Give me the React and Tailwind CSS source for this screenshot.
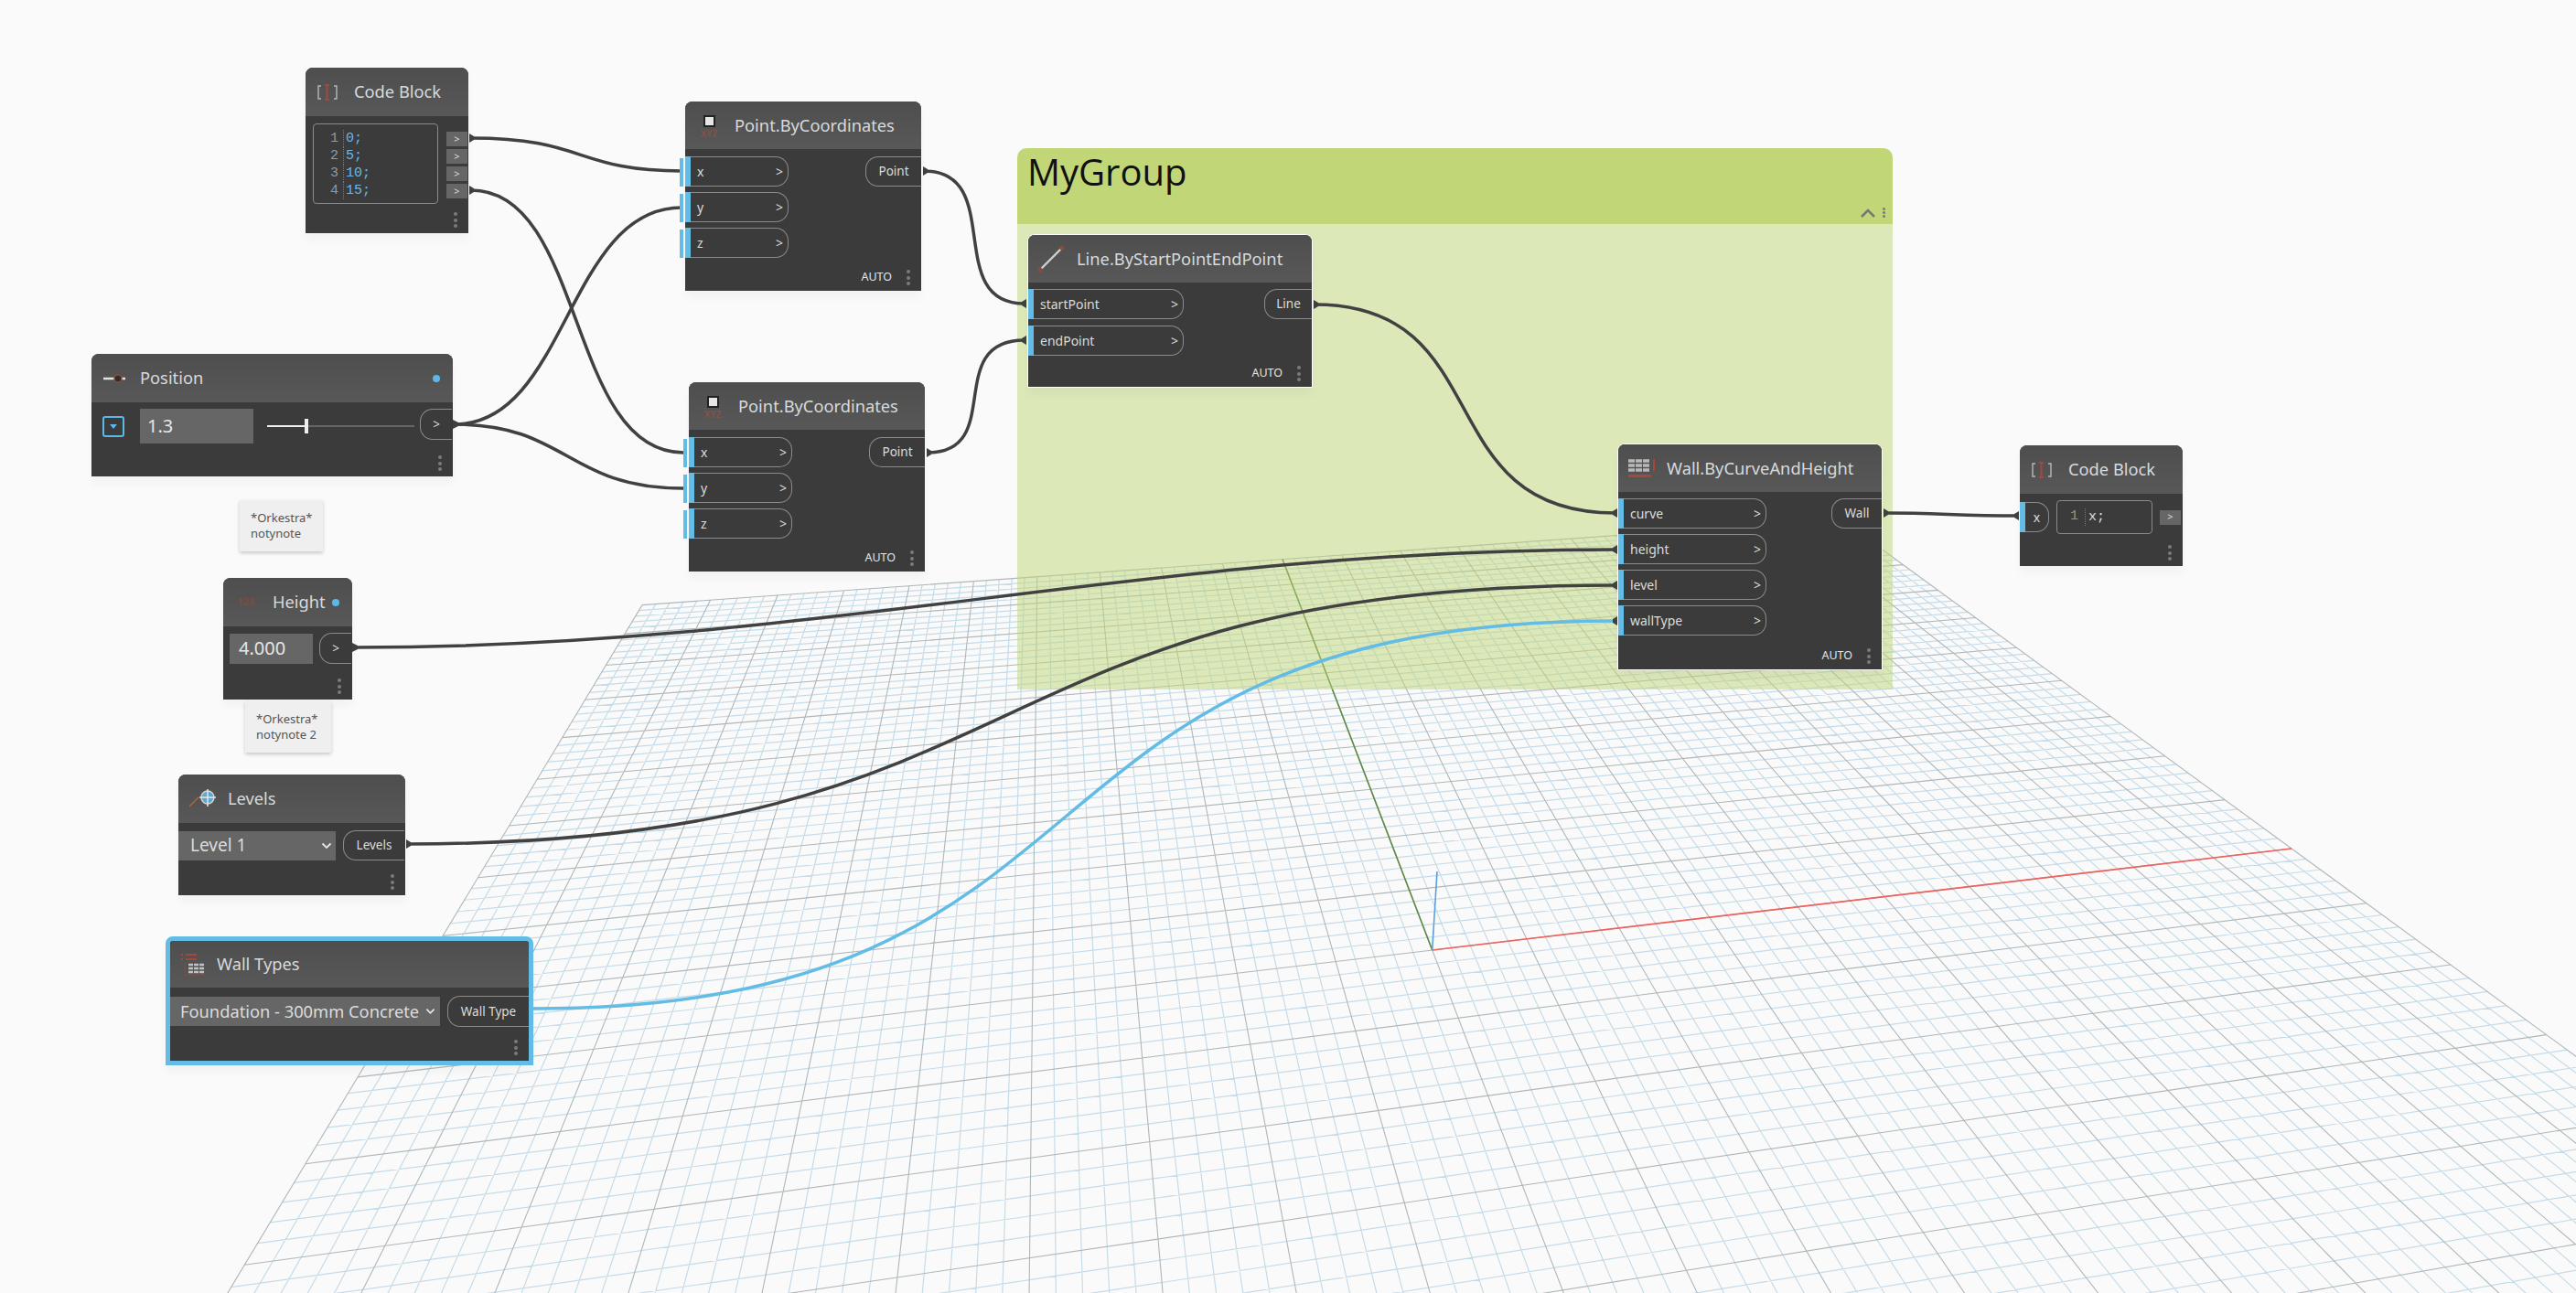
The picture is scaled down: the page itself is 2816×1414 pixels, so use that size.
import React from 'react';

// Perspective mapping of the ground plane, world units are major grid cells
const project = (X, Y) => {
  const w = 1 + 0.011135 * X + 0.06285 * Y;
  return [(1565.7 + 121.82 * X + 71.75 * Y) / w, (1039 - 0.77 * X - 4.3 * Y) / w];
};

const gridLines = () => {
  const minor = [];
  const major = [];
  for (let i = -50; i <= 50; i++) {
    const t = i / 5;
    const [a, b] = [project(t, -10), project(t, 10)];
    const [c, d] = [project(-10, t), project(10, t)];
    const target = i % 5 === 0 ? major : minor;
    target.push(`M${a[0].toFixed(1)} ${a[1].toFixed(1)}L${b[0].toFixed(1)} ${b[1].toFixed(1)}`);
    target.push(`M${c[0].toFixed(1)} ${c[1].toFixed(1)}L${d[0].toFixed(1)} ${d[1].toFixed(1)}`);
  }
  return { minor: minor.join(''), major: major.join('') };
};

const Grid = () => {
  const { minor, major } = gridLines();
  const o = project(0, 0);
  const xEnd = project(10, 0);
  const yEnd = project(0, 10);
  return (
    <svg className="absolute left-0 top-0" width="2816" height="1414" viewBox="0 0 2816 1414" fill="none">
      <path d={minor} stroke="#c6dbe8" strokeWidth="1.2" />
      <path d={major} stroke="#afb7ba" strokeWidth="1.1" />
      <line x1={o[0]} y1={o[1]} x2={xEnd[0]} y2={xEnd[1]} stroke="#f0605c" strokeWidth="1.6" />
      <line x1={o[0]} y1={o[1]} x2={yEnd[0]} y2={yEnd[1]} stroke="#5d8a45" strokeWidth="1.6" />
      <line x1={o[0]} y1={o[1]} x2="1571" y2="953" stroke="#5a9fe0" strokeWidth="1.6" />
    </svg>
  );
};

const Wires = () => (
  <svg className="absolute left-0 top-0" width="2816" height="1414" viewBox="0 0 2816 1414" fill="none">
    <g stroke="#414141" strokeWidth="3.5">
      <path d="M515 151C640 151 630 187 745 187" />
      <path d="M515 208C640 208 620 495 747 495" />
      <path d="M497 464C620 464 620 227 745 227" />
      <path d="M497 464C620 464 620 534 747 534" />
      <path d="M1010 187C1100 187 1030 332 1120 332" />
      <path d="M1014 495C1100 495 1030 372 1120 372" />
      <path d="M1437 333C1640 333 1560 561 1766 561" />
      <path d="M2060 561C2120 561 2140 564 2205 564" />
      <path d="M387 708C900 708 1250 601 1766 601" />
      <path d="M445 923C1150 923 1050 640 1766 640" />
    </g>
    <path d="M583 1103C1250 1103 1080 679 1766 679" stroke="#62bce6" strokeWidth="3.5" />
    <g fill="#414141">
      <path d="M513 146L518 149V153L513 156Z" />
      <path d="M513 203L518 206V210L513 213Z" />
      <path d="M495 459L501 462V466L495 469Z" />
      <path d="M1009 182L1014 185V189L1009 192Z" />
      <path d="M1013 490L1018 493V497L1013 500Z" />
      <path d="M1436 328L1441 331V335L1436 338Z" />
      <path d="M2059 556L2064 559V563L2059 566Z" />
      <path d="M385 703L391 706V710L385 713Z" />
      <path d="M444 918L449 921V925L444 928Z" />
      <path d="M1122 327L1117 330V334L1122 337Z" />
      <path d="M1122 367L1117 370V374L1122 377Z" />
      <path d="M1768 556L1763 559V563L1768 566Z" />
      <path d="M1768 596L1763 599V603L1768 606Z" />
      <path d="M1768 635L1763 638V642L1768 645Z" />
      <path d="M1768 674L1763 677V681L1768 684Z" />
      <path d="M2207 559L2202 562V566L2207 569Z" />
    </g>
  </svg>
);

const Dots = () => (
  <div className="flex flex-col gap-[2.5px]">
    <span className="h-1 w-1 rounded-full bg-[#7b7b7b]" />
    <span className="h-1 w-1 rounded-full bg-[#7b7b7b]" />
    <span className="h-1 w-1 rounded-full bg-[#7b7b7b]" />
  </div>
);

const Footer = ({ auto }) => (
  <div className="mt-auto flex items-center justify-end gap-[16px] pb-[6px] pr-[12px]">
    {auto && <span className="text-[12.5px] leading-none text-[#e4e4e4]">AUTO</span>}
    <Dots />
  </div>
);

const InPort = ({ label, stub, className }) => (
  <div className={`relative flex items-center justify-between rounded-r-[14px] border border-l-0 border-[#8b8b8b] pr-[5px] text-[14px] text-[#dcdcdc] ${className}`}>
    {stub && <span className="absolute -left-[6px] top-px h-[31px] w-[4px] bg-[#62bce6]" />}
    <span className="absolute left-0 -top-px -bottom-px w-[6px] bg-[#62bce6]" />
    <span className="pl-[13px]">{label}</span>
    <span className="text-[14px]">&gt;</span>
  </div>
);

const OutPort = ({ label, className }) => (
  <div className={`flex items-center justify-center rounded-l-[14px] border border-r-0 border-[#8b8b8b] text-[13.5px] text-[#dcdcdc] ${className}`}>
    {label}
  </div>
);

const Header = ({ icon, title, dot, className }) => (
  <div className={`flex shrink-0 items-center bg-linear-to-b from-[#4e4e4e] to-[#585858] ${className}`}>
    {icon}
    <span className="text-[18.3px] leading-none text-[#d6dadd]">{title}</span>
    {dot}
  </div>
);

const BracketIcon = ({ className }) => (
  <svg className={className} width="24" height="20" viewBox="0 0 24 20" fill="none">
    <path d="M5 3H2V17H5" stroke="#b8b8b8" strokeWidth="1.4" />
    <path d="M19 3H22V17H19" stroke="#b8b8b8" strokeWidth="1.4" />
    <path d="M9 2H14M11.5 2V18M9 18H14" stroke="#a5473b" strokeWidth="2" />
  </svg>
);

const PointIcon = ({ className }) => (
  <div className={`flex w-[24px] flex-col items-center pt-[3px] ${className}`}>
    <span className="h-[13px] w-[13px] border-2 border-[#222] bg-[#e6e6e6]" />
    <span className="mt-[2px] text-[10px] font-bold leading-[11px] text-[#7d5349]">XYZ</span>
  </div>
);

const SliderIcon = () => (
  <svg className="ml-[12px] mr-[14px]" width="27" height="14" viewBox="0 0 27 14" fill="none">
    <path d="M1 7H25" stroke="#e2e2e2" strokeWidth="2.5" />
    <circle cx="17" cy="7" r="4" fill="#2d2d2d" stroke="#8e4a3d" strokeWidth="1.5" />
  </svg>
);

const LevelsIcon = () => (
  <svg className="ml-[11px] mr-[11px]" width="32" height="22" viewBox="0 0 32 22" fill="none">
    <path d="M1 19L11 9" stroke="#b0643c" strokeWidth="1.5" />
    <circle cx="21" cy="9" r="7" fill="#5fa6cc" stroke="#d5d5d5" strokeWidth="1.4" />
    <path d="M21 0V19M12 9H30" stroke="#e6e6e6" strokeWidth="1.5" />
  </svg>
);

const WallTypesIcon = () => (
  <svg className="ml-[12px] mr-[12px]" width="27" height="25" viewBox="0 0 27 25" fill="none">
    <path d="M0 2H2M5 2H17M0 7H2M5 7H17" stroke="#a5473b" strokeWidth="2" />
    <path d="M4 11V24H26" stroke="#a5473b" strokeWidth="1" strokeDasharray="2 1" />
    <path d="M8 13H25M8 17H25M8 21H25" stroke="#c2c2c2" strokeWidth="2.5" strokeDasharray="5 1" />
  </svg>
);

const LineIcon = () => (
  <svg className="ml-[9px] mr-[12px]" width="32" height="32" viewBox="0 0 32 32" fill="none">
    <path d="M4 28L28 4" stroke="#cfcfcf" strokeWidth="2.4" />
    <circle cx="28" cy="4" r="2.6" fill="#8c4a3d" />
    <circle cx="4" cy="28" r="2.6" fill="#8c4a3d" />
  </svg>
);

const WallIcon = () => (
  <svg className="ml-[11px] mr-[13px]" width="29" height="22" viewBox="0 0 29 22" fill="none">
    <path d="M0 3H24M0 8H24M0 13H24" stroke="#b9b9b9" strokeWidth="3.5" strokeDasharray="7 1" />
    <path d="M0 19.5H25" stroke="#a5473b" strokeWidth="3" />
    <path d="M28 1V14" stroke="#a5473b" strokeWidth="2" />
  </svg>
);

const NodeShell = ({ className, children }) => (
  <div className={`absolute flex flex-col overflow-visible rounded-t-[8px] bg-[#3b3b3b] shadow-[0_8px_10px_rgba(0,0,0,0.03)] ${className}`}>
    {children}
  </div>
);

const PointNode = ({ className }) => (
  <NodeShell className={`h-[207px] w-[258px] ${className}`}>
    <Header
      className="h-[52px] rounded-t-[8px]"
      icon={<PointIcon className="ml-[14px] mr-[16px]" />}
      title="Point.ByCoordinates"
    />
    <div className="flex justify-between pt-[8px]">
      <div className="flex flex-col gap-[6px]">
        <InPort stub label="x" className="h-[33px] w-[113px]" />
        <InPort stub label="y" className="h-[33px] w-[113px]" />
        <InPort stub label="z" className="h-[33px] w-[113px]" />
      </div>
      <OutPort label="Point" className="h-[33px] w-[61px]" />
    </div>
    <Footer auto />
  </NodeShell>
);

const CodeLine = ({ n, code }) => (
  <div className="flex h-[19px] items-center font-['Liberation_Mono',monospace] text-[15px] leading-none">
    <span className="w-[27px] text-right text-[#8e9aa5]">{n}</span>
    <span className="ml-[5px] h-[19px] border-l border-dotted border-[#777] pl-[2px] leading-[19px] text-[#6bb8e6]">{code}</span>
  </div>
);

const NumberOut = ({ className }) => (
  <div className={`flex h-[16px] w-[23px] items-center justify-center bg-[#666] text-[11px] text-[#ddd] ${className}`}>&gt;</div>
);

export default function App() {
  return (
    <div className="relative h-[1414px] w-[2816px] overflow-hidden bg-[#fafafa] font-['Noto_Sans',sans-serif]">
      <Grid />

      {/* MyGroup */}
      <div className="absolute left-[1112px] top-[162px] flex h-[592px] w-[957px] flex-col">
        <div className="relative flex h-[83px] shrink-0 rounded-t-[10px] bg-[#c0d677] pl-[11px] pt-[1px] font-['Open_Sans',sans-serif] text-[40px] leading-[50px] text-[#111]">
          MyGroup
          <div className="absolute bottom-[7px] right-[8px] flex items-center gap-[8px]">
            <svg width="16" height="10" viewBox="0 0 16 10" fill="none">
              <path d="M1 9L8 2L15 9" stroke="#777" strokeWidth="2.5" />
            </svg>
            <div className="flex flex-col gap-px">
              <span className="h-[3px] w-[3px] rounded-full bg-[#777]" />
              <span className="h-[3px] w-[3px] rounded-full bg-[#777]" />
              <span className="h-[3px] w-[3px] rounded-full bg-[#777]" />
            </div>
          </div>
        </div>
        <div className="flex-1 bg-[#c0d677]/50" />
      </div>

      <Wires />

      {/* Code Block, numbers */}
      <NodeShell className="left-[334px] top-[74px] h-[181px] w-[178px]">
        <Header className="h-[53px] rounded-t-[8px]" icon={<BracketIcon className="ml-[12px] mr-[17px]" />} title="Code Block" />
        <div className="flex pl-[8px] pt-[8px]">
          <div className="h-[88px] w-[137px] rounded-[4px] border-[1.5px] border-[#8a8a8a] pt-[6px]">
            <CodeLine n="1" code="0;" />
            <CodeLine n="2" code="5;" />
            <CodeLine n="3" code="10;" />
            <CodeLine n="4" code="15;" />
          </div>
          <div className="ml-[9px] flex flex-col gap-[3px] pt-[9px]">
            <NumberOut />
            <NumberOut />
            <NumberOut />
            <NumberOut />
          </div>
        </div>
        <Footer />
      </NodeShell>

      <PointNode className="left-[749px] top-[111px]" />
      <PointNode className="left-[753px] top-[418px]" />

      {/* Position slider */}
      <NodeShell className="left-[100px] top-[387px] h-[134px] w-[395px]">
        <Header
          className="h-[53px] rounded-t-[8px]"
          icon={<SliderIcon />}
          title="Position"
          dot={<span className="ml-auto mr-[14px] h-2 w-2 rounded-full bg-[#5cb8e6]" />}
        />
        <div className="flex items-center pl-[12px] pt-[7px]">
          <div className="flex h-[23px] w-[24px] items-center justify-center rounded-[3px] border-2 border-[#5cb8e6]">
            <span className="h-0 w-0 border-x-[4px] border-t-[5px] border-x-transparent border-t-[#5cb8e6]" />
          </div>
          <div className="ml-[17px] flex h-[38px] w-[124px] items-center bg-[#666] pl-[8px] text-[20px] text-[#e6e6e6]">1.3</div>
          <div className="relative ml-[15px] h-[2px] w-[161px] bg-[#666]">
            <div className="h-[2px] w-[43px] bg-[#eee]" />
            <span className="absolute left-[41px] -top-[7px] h-[16px] w-[4px] bg-[#eee]" />
          </div>
          <OutPort label=">" className="ml-[6px] -mt-[4px] h-[34px] w-[35px] text-[11px]" />
        </div>
        <Footer />
      </NodeShell>

      {/* Notes */}
      <div className="absolute left-[262px] top-[547px] h-[56px] w-[91px] bg-[#efefef] pl-[12px] pt-[11px] text-[13px] leading-[17px] text-[#555] shadow-[0_2px_4px_rgba(0,0,0,0.2)]">
        *Orkestra*<br />notynote
      </div>

      {/* Height number */}
      <NodeShell className="left-[244px] top-[632px] h-[133px] w-[141px]">
        <Header
          className="h-[53px] rounded-t-[8px]"
          icon={<span className="ml-[15px] mr-[16px] w-[23px] text-[11px] font-bold text-[#7e4a40]">123</span>}
          title="Height"
          dot={<span className="ml-auto mr-[14px] h-2 w-2 rounded-full bg-[#5cb8e6]" />}
        />
        <div className="flex items-center pl-[7px] pt-[7px]">
          <div className="flex h-[33px] w-[91px] items-center bg-[#666] pl-[10px] text-[20px] text-[#e6e6e6]">4.000</div>
          <OutPort label=">" className="ml-[7px] h-[34px] w-[35px] text-[11px]" />
        </div>
        <Footer />
      </NodeShell>

      <div className="absolute left-[268px] top-[767px] h-[56px] w-[94px] bg-[#efefef] pl-[12px] pt-[11px] text-[13px] leading-[17px] text-[#555] shadow-[0_2px_4px_rgba(0,0,0,0.2)]">
        *Orkestra*<br />notynote 2
      </div>

      {/* Levels */}
      <NodeShell className="left-[195px] top-[847px] h-[132px] w-[248px]">
        <Header className="h-[53px] rounded-t-[8px]" icon={<LevelsIcon />} title="Levels" />
        <div className="flex items-center pt-[8px]">
          <div className="flex h-[32px] w-[172px] items-center justify-between bg-[#666] pl-[13px] pr-[4px] text-[19px] text-[#dcdcdc]">
            Level 1
            <svg width="12" height="8" viewBox="0 0 12 8" fill="none">
              <path d="M1.5 1.5L6 6L10.5 1.5" stroke="#e6e6e6" strokeWidth="1.8" />
            </svg>
          </div>
          <OutPort label="Levels" className="ml-[8px] h-[33px] w-[67px]" />
        </div>
        <Footer />
      </NodeShell>

      {/* Wall Types, selected */}
      <NodeShell className="left-[181px] top-[1024px] h-[141px] w-[402px] border-[5px] border-[#62bce6]">
        <Header className="h-[51px] rounded-t-[5px]" icon={<WallTypesIcon />} title="Wall Types" />
        <div className="flex items-center pt-[9px]">
          <div className="flex h-[32px] w-[295px] items-center justify-between bg-[#666] pl-[11px] pr-[5px] text-[18.3px] text-[#dcdcdc]">
            <span className="whitespace-nowrap">Foundation - 300mm Concrete</span>
            <svg className="shrink-0" width="11" height="8" viewBox="0 0 12 8" fill="none">
              <path d="M1.5 1.5L6 6L10.5 1.5" stroke="#e6e6e6" strokeWidth="1.8" />
            </svg>
          </div>
          <OutPort label="Wall Type" className="ml-[8px] h-[34px] w-[89px]" />
        </div>
        <Footer />
      </NodeShell>

      {/* Line.ByStartPointEndPoint */}
      <NodeShell className="left-[1123px] top-[256px] h-[168px] w-[312px] border-[1.5px] border-white">
        <Header className="h-[52px] rounded-t-[7px]" icon={<LineIcon />} title="Line.ByStartPointEndPoint" />
        <div className="flex justify-between pt-[7px]">
          <div className="flex flex-col gap-[7px]">
            <InPort label="startPoint" className="h-[33px] w-[170px]" />
            <InPort label="endPoint" className="h-[33px] w-[170px]" />
          </div>
          <OutPort label="Line" className="h-[33px] w-[52px]" />
        </div>
        <Footer auto />
      </NodeShell>

      {/* Wall.ByCurveAndHeight */}
      <NodeShell className="left-[1768px] top-[485px] h-[248px] w-[290px] border-[1.5px] border-white">
        <Header className="h-[52px] rounded-t-[7px]" icon={<WallIcon />} title="Wall.ByCurveAndHeight" />
        <div className="flex justify-between pt-[7px]">
          <div className="flex flex-col gap-[6px]">
            <InPort label="curve" className="h-[33px] w-[162px]" />
            <InPort label="height" className="h-[33px] w-[162px]" />
            <InPort label="level" className="h-[33px] w-[162px]" />
            <InPort label="wallType" className="h-[33px] w-[162px]" />
          </div>
          <OutPort label="Wall" className="h-[33px] w-[55px]" />
        </div>
        <Footer auto />
      </NodeShell>

      {/* Code Block, x */}
      <NodeShell className="left-[2208px] top-[487px] h-[132px] w-[178px]">
        <Header className="h-[53px] rounded-t-[8px]" icon={<BracketIcon className="ml-[12px] mr-[17px]" />} title="Code Block" />
        <div className="flex items-center pt-[7px]">
          <div className="relative flex h-[33px] w-[32px] items-center justify-center rounded-r-[14px] border border-l-0 border-[#8b8b8b] pl-[6px] text-[14px] text-[#dcdcdc]">
            <span className="absolute left-0 -top-px -bottom-px w-[6px] bg-[#62bce6]" />
            x
          </div>
          <div className="ml-[8px] flex h-[37px] w-[105px] items-center rounded-[4px] border-[1.5px] border-[#8a8a8a] font-['Liberation_Mono',monospace] text-[15px]">
            <span className="w-[23px] text-right text-[#8e9a88]">1</span>
            <span className="ml-[7px] h-[19px] border-l border-dotted border-[#777] pl-[3px] leading-[19px] text-[#dcdcdc]">x;</span>
          </div>
          <NumberOut className="ml-[8px]" />
        </div>
        <Footer />
      </NodeShell>
    </div>
  );
}
